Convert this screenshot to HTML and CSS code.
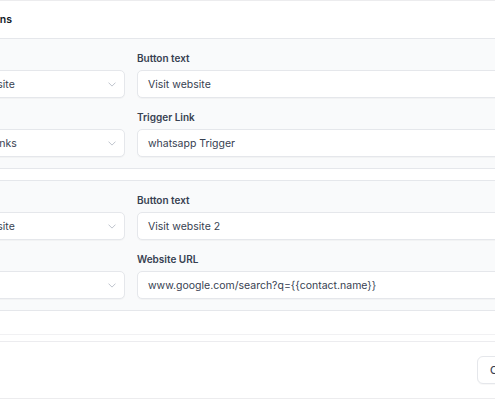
FILE: index.html
```html
<!DOCTYPE html>
<html>
<head>
<meta charset="utf-8">
<link rel="stylesheet" href="styles.css">
</head>
<body>
<div class="modal">
  <div class="header"><h2 class="title">Buttons</h2></div>
  <div class="body">
    <div class="card card-first">
      <div class="row">
        <div class="field">
          <label class="label">Button type</label>
          <div class="select"><span class="value">Visit website</span><svg class="chev" viewBox="0 0 10 6" width="8" height="5"><path d="M1 1l4 4 4-4" fill="none" stroke="#b6bcc6" stroke-width="1.1" stroke-linecap="round" stroke-linejoin="round"/></svg></div>
        </div>
        <div class="field">
          <label class="label">Button text</label>
          <div class="input">Visit website</div>
        </div>
      </div>
      <div class="row">
        <div class="field">
          <label class="label">Action</label>
          <div class="select"><span class="value">Trigger Links</span><svg class="chev" viewBox="0 0 10 6" width="8" height="5"><path d="M1 1l4 4 4-4" fill="none" stroke="#b6bcc6" stroke-width="1.1" stroke-linecap="round" stroke-linejoin="round"/></svg></div>
        </div>
        <div class="field">
          <label class="label">Trigger Link</label>
          <div class="input">whatsapp Trigger</div>
        </div>
      </div>
    </div>
    <div class="card">
      <div class="row">
        <div class="field">
          <label class="label">Button type</label>
          <div class="select"><span class="value">Visit website</span><svg class="chev" viewBox="0 0 10 6" width="8" height="5"><path d="M1 1l4 4 4-4" fill="none" stroke="#b6bcc6" stroke-width="1.1" stroke-linecap="round" stroke-linejoin="round"/></svg></div>
        </div>
        <div class="field">
          <label class="label">Button text</label>
          <div class="input">Visit website 2</div>
        </div>
      </div>
      <div class="row">
        <div class="field">
          <label class="label">Action</label>
          <div class="select"><span class="value">URL</span><svg class="chev" viewBox="0 0 10 6" width="8" height="5"><path d="M1 1l4 4 4-4" fill="none" stroke="#b6bcc6" stroke-width="1.1" stroke-linecap="round" stroke-linejoin="round"/></svg></div>
        </div>
        <div class="field">
          <label class="label">Website URL</label>
          <div class="input">www.google.com/search?q={{contact.name}}</div>
        </div>
      </div>
    </div>
  </div>
  <div class="spacer"></div>
  <div class="gap"></div>
  <div class="footer">
    <button class="btn">Cancel</button>
  </div>
</div>
</body>
</html>
```

FILE: styles.css
```css
html, body {
  margin: 0;
  padding: 0;
  width: 495px;
  height: 400px;
  overflow: hidden;
  background: #ffffff;
}
body {
  font-family: Inter, "Noto Sans", sans-serif;
  color: #374151;
}
.modal {
  width: 760px;
  margin-left: -73px;
  border-top: 1px solid #ececee;
  background: #ffffff;
}
.header {
  height: 37px;
  display: flex;
  align-items: center;
  padding-left: 46px;
  border-bottom: 1px solid #e5e7eb;
}
.title {
  margin: 0;
  font-size: 10.5px;
  font-weight: 600;
  color: #111827;
}
.body {
  display: flex;
  flex-direction: column;
  gap: 11px;
}
.card {
  background: #f9fafb;
  border-top: 1px solid #e5e7eb;
  border-bottom: 1px solid #e5e7eb;
  padding: 12px 14px 11px 14px;
  display: flex;
  flex-direction: column;
  gap: 12px;
}
.card-first {
  border-top: none;
}
.row {
  display: grid;
  grid-template-columns: 184px 1fr;
  column-gap: 12px;
}
.field {
  display: flex;
  flex-direction: column;
  gap: 5px;
}
.label {
  font-size: 10px;
  line-height: 14px;
  font-weight: 600;
  color: #374151;
}
.select, .input {
  box-sizing: border-box;
  height: 28px;
  border: 1px solid #e5e7eb;
  border-radius: 5px;
  background: #ffffff;
  box-shadow: 0 1px 1px rgba(0,0,0,0.03);
  display: flex;
  align-items: center;
  padding: 0 10px;
  font-size: 10.5px;
  color: #374151;
  white-space: nowrap;
}
.select {
  justify-content: space-between;
}
.chev {
  display: block;
  margin-right: -2px;
}
.spacer {
  height: 23px;
  border-bottom: 1px solid #f1f1f3;
}
.gap {
  height: 6px;
  border-bottom: 1px solid #ececef;
}
.footer {
  height: 56px;
  display: flex;
  align-items: center;
  padding-left: 550px;
  border-bottom: 1px solid #ececee;
}
.btn {
  box-sizing: border-box;
  height: 28px;
  padding: 0 12px;
  border: 1px solid #e5e7eb;
  border-radius: 6px;
  background: #ffffff;
  font-family: Inter, "Noto Sans", sans-serif;
  font-size: 10.5px;
  font-weight: 500;
  color: #374151;
  box-shadow: 0 1px 1px rgba(0,0,0,0.03);
}
```
